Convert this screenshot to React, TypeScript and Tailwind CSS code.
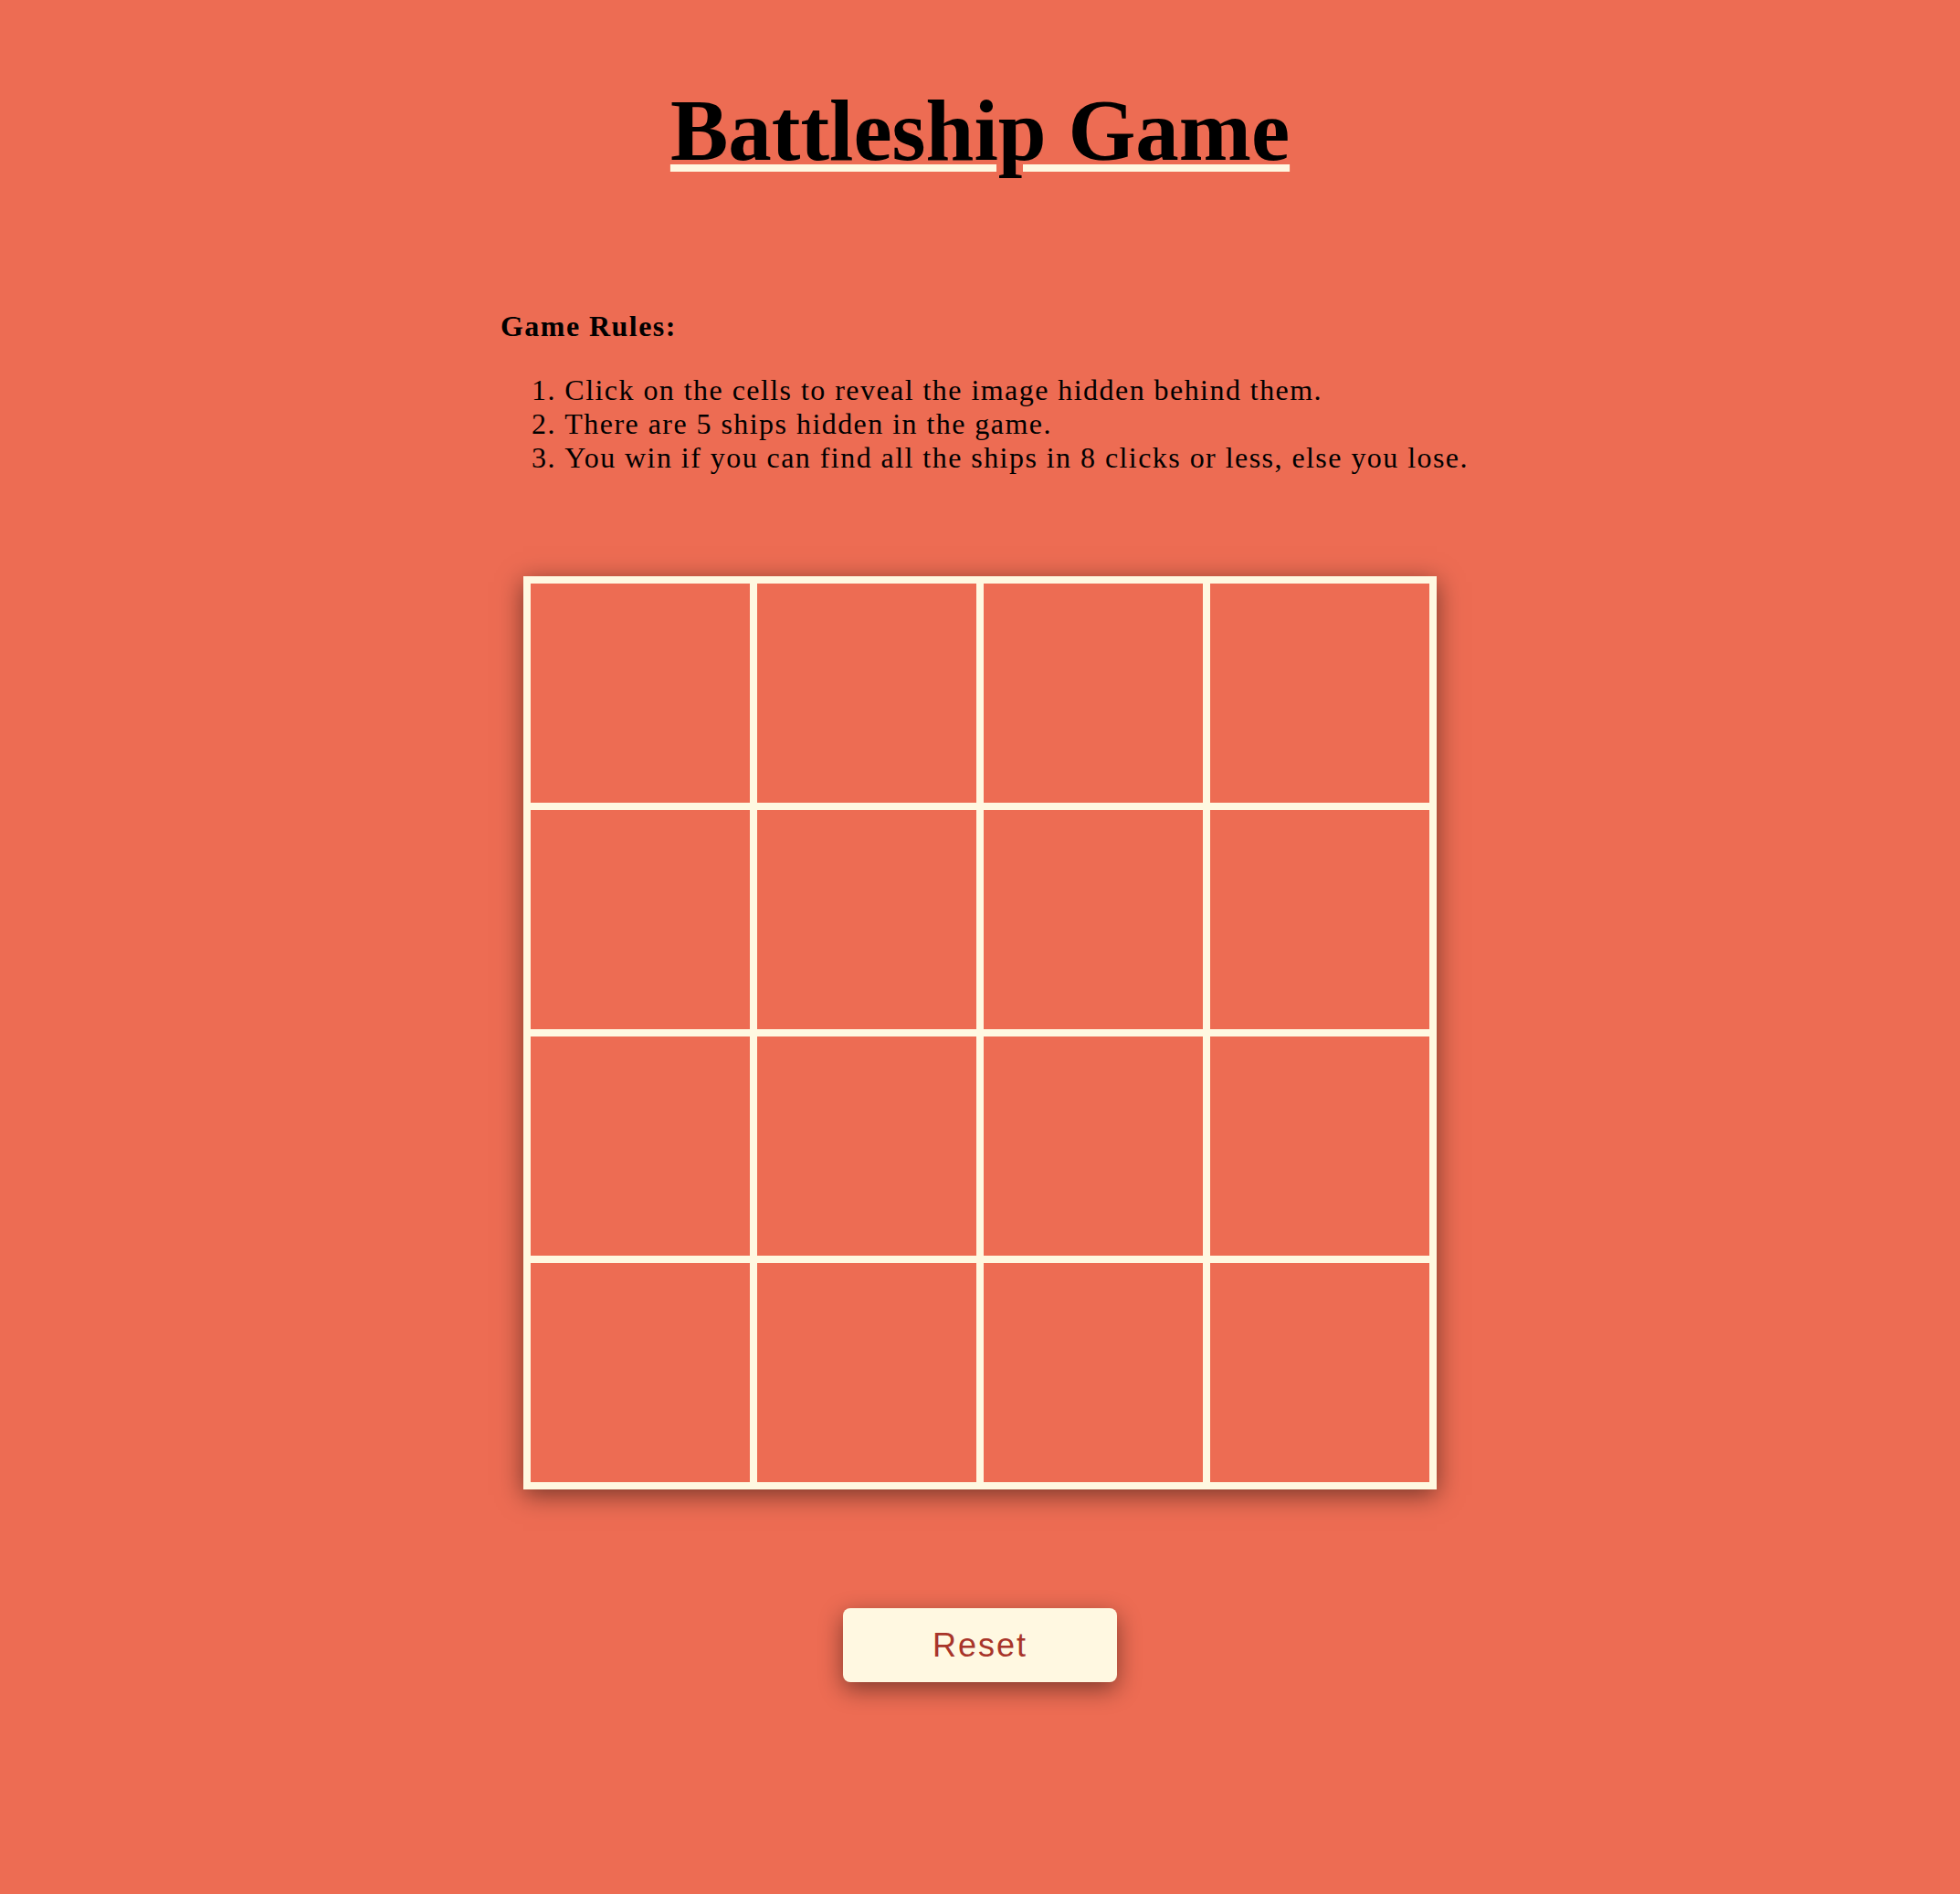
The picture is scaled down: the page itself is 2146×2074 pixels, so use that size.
import React from "react";

// Battleship board: 4x4 cells, a rules block and a reset button.

const rules = [
  "Click on the cells to reveal the image hidden behind them.",
  "There are 5 ships hidden in the game.",
  "You win if you can find all the ships in 8 clicks or less, else you lose.",
];

const cells = Array.from({ length: 16 }, (_, i) => i);

const App = () => {
  return (
    <div className="min-h-screen w-full bg-[#ed6c53] text-black leading-[normal] font-['Liberation_Serif',serif]">
      <div className="flex flex-col items-center pt-[88px]">
        {/* Title */}
        <h1 className="text-[95px] font-bold underline decoration-[#fff8e1] decoration-[8px] underline-offset-[5px]">
          Battleship Game
        </h1>

        {/* Rules */}
        <div className="w-[1050px] mt-[141px] text-[32px] tracking-[1.45px]">
          <p className="font-bold">Game Rules:</p>
          <ol className="list-decimal list-inside mt-[33px] pl-[34px] whitespace-nowrap">
            {rules.map((r) => (
              <li key={r}>{r}</li>
            ))}
          </ol>
        </div>

        {/* Board */}
        <div className="mt-[111px] grid grid-cols-4 gap-[8px] p-[8px] bg-[#fff8e1] shadow-[0_6px_26px_rgba(0,0,0,0.5)]">
          {cells.map((c) => (
            <button key={c} className="w-[240px] h-[240px] bg-[#ed6c53]" />
          ))}
        </div>

        {/* Reset */}
        <button className="mt-[130px] w-[300px] h-[81px] rounded-[8px] bg-[#fff8e1] text-[#a8352a] text-[36px] tracking-[2px] font-['Liberation_Sans',sans-serif] shadow-[0_8px_26px_rgba(0,0,0,0.45)]">
          Reset
        </button>
      </div>
    </div>
  );
};

export default App;
